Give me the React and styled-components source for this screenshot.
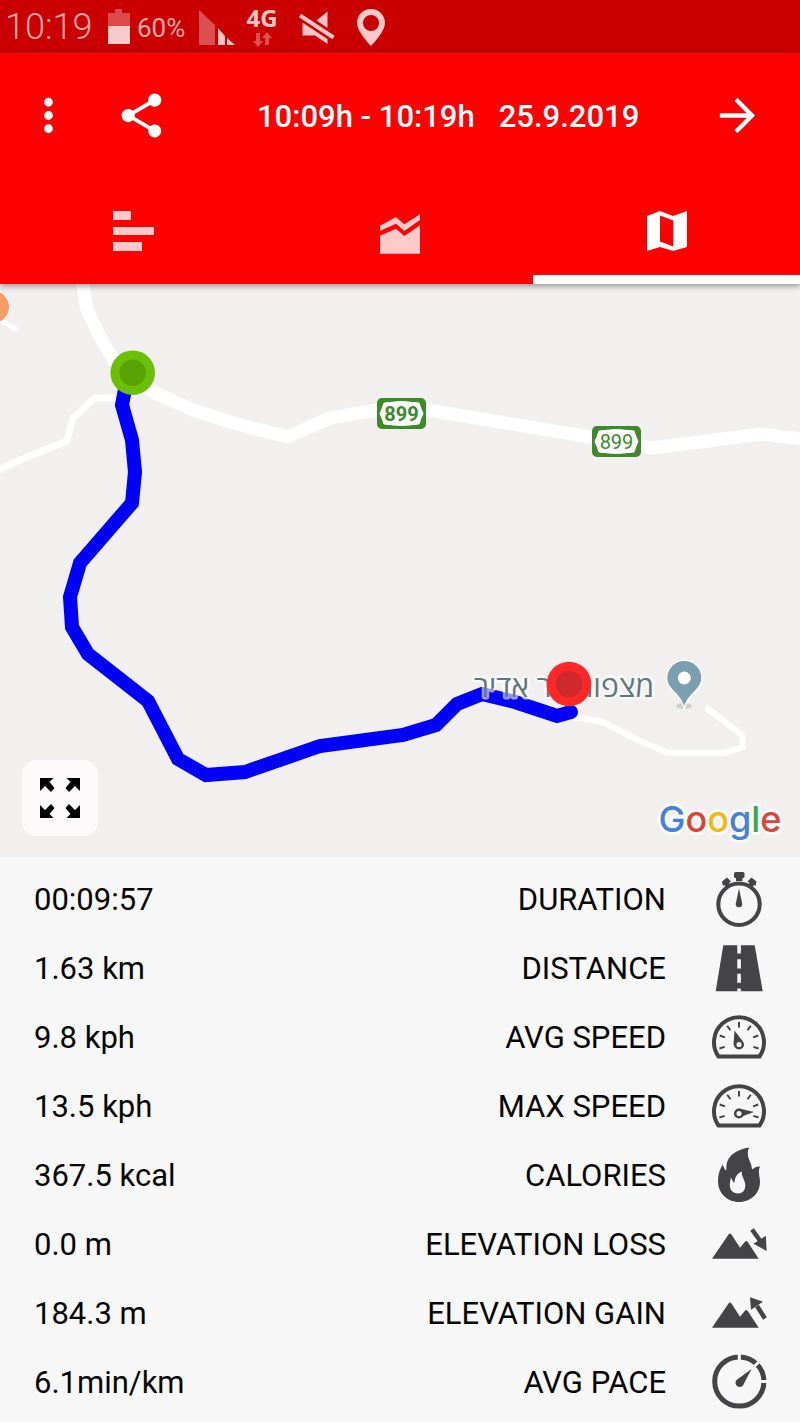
import React from "react";
import styled, { createGlobalStyle } from "styled-components";
import { MdMoreVert, MdShare, MdArrowForward } from "react-icons/md";

const GlobalStyle = createGlobalStyle`
  *, *::before, *::after { box-sizing: border-box; }
  body {
    margin: 0;
    background: #f7f7f7;
    color: #060606;
    font-family: Roboto, "Liberation Sans", sans-serif;
  }
`;

const TRACK = "#0000fa";
const GLYPH = "#444446";

/* ---------- Status bar ---------- */

const StatusBar = styled.div`
  display: flex;
  align-items: center;
  height: 53px;
  padding-left: 5px;
  background: #ca0000;
  color: #f3a9a9;
`;

const Clock = styled.time`
  width: 102px;
  padding-top: 2px;
  font-size: 36px;
  font-weight: 300;
  line-height: 53px;
`;

const BatteryLevel = styled.span`
  width: 62px;
  padding: 4px 0 0 6px;
  font-size: 26px;
  font-weight: 400;
  line-height: 53px;
`;

const StatusIcon = styled.svg`
  display: block;
  flex: none;
  height: 53px;
  width: ${(p) => p.$width}px;
`;

const Network = styled.div`
  display: flex;
  flex-direction: column;
  align-items: center;
  width: 50px;
  font-family: "Open Sans", sans-serif;
  font-size: 24px;
  font-weight: 700;
  line-height: 26px;
  color: #f9c4c4;
`;

function Status() {
  return (
    <StatusBar>
      <Clock>10:19</Clock>
      <StatusIcon $width={24} viewBox="0 0 24 53" aria-hidden="true">
        <path d="M8 9h7v4h8v13H1V13h7z" fill="#db4a4a" />
        <path d="M1 26h22v18H1z" fill="#f8cccc" />
      </StatusIcon>
      <BatteryLevel>60%</BatteryLevel>
      <StatusIcon $width={44} viewBox="0 0 44 53" aria-hidden="true">
        <path d="M6 10l16 15v20H6z" fill="#dd4e4e" />
        <path d="M25 28l7 8v9h-7zM34 38l8 7h-8z" fill="#f8c4c4" />
      </StatusIcon>
      <Network>
        4G
        <svg width="20" height="18" viewBox="0 0 20 18" aria-hidden="true">
          <path d="M4 2h4v8h3l-5 6-5-6h3zM13 14V7h-3l5-6 5 6h-3v7z" fill="#dc5050" />
        </svg>
      </Network>
      <StatusIcon $width={60} viewBox="0 0 60 53" aria-hidden="true">
        <path d="M29.500 20.500l11-9V28zM15.500 22.500v13H28l12.500 8.500v-5z" fill="#f8c4c4" />
        <path d="M13 15.500L46.500 37.500" stroke="#f8c4c4" strokeWidth="4" />
      </StatusIcon>
      <StatusIcon $width={46} viewBox="0 0 46 53" aria-hidden="true">
        <path
          d="M24 9C16 9 10 15 10 23c0 9 14 23 14 23s14-14 14-23C38 15 32 9 24 9zm0 22a8 8 0 1 1 0-16 8 8 0 0 1 0 16z"
          fill="#f9c9c9"
          fillRule="evenodd"
        />
      </StatusIcon>
    </StatusBar>
  );
}

/* ---------- App bar and tabs ---------- */

const Header = styled.header`
  position: relative;
  z-index: 1;
  background: #fe0000;
  color: #fff;
  box-shadow: 0 2px 6px rgba(0, 0, 0, 0.4);
`;

const AppBar = styled.div`
  display: flex;
  align-items: center;
  height: 125px;
  padding: 0 36px 0 22px;
`;

const IconButton = styled.button`
  display: block;
  flex: none;
  width: 53px;
  height: 53px;
  padding: 0;
  border: 0;
  background: none;
  color: inherit;
  cursor: pointer;

  & + & { margin-left: 40px; }
  svg { display: block; width: 100%; height: 100%; }
`;

const Title = styled.h1`
  display: flex;
  flex: 1;
  gap: 24px;
  margin: 0;
  padding: 3px 0 0 89px;
  font-size: 31px;
  font-weight: 500;
  line-height: 40px;
  white-space: nowrap;
`;

const Tabs = styled.div`
  display: grid;
  grid-template-columns: repeat(3, 1fr);
`;

const Tab = styled.button`
  display: flex;
  justify-content: center;
  height: 106px;
  padding: 26px 0 0;
  border: 0;
  border-bottom: 9px solid ${(p) => (p["aria-selected"] ? "#fff" : "transparent")};
  background: none;
  color: ${(p) => (p["aria-selected"] ? "#fff" : "#ffcaca")};
  cursor: pointer;
`;

const TabIcon = styled.svg`
  width: 54px;
  height: 54px;
  fill: currentColor;
`;

const TABS = [
  { name: "Laps", path: "M7 7h18v9H7zM7 23h41v8H7zM7 38h29v9H7z" },
  {
    name: "Charts",
    path: "M7 21.7L23 13l8.3 7.3L47 10.3V16L31.3 27 23 19.7 7 27zM7 31.7l16-7 8.3 7.3L47 21.3v28.4H7z",
  },
  {
    name: "Map",
    path: "M7 12L20 7l13 5 14-5v36l-14 4-13-4-13 4zM20 11.5v26l13.3 5v-26z",
  },
];

/* ---------- Map ---------- */

const MapPanel = styled.section`
  position: relative;
  aspect-ratio: 800 / 573;
  background: #f1f0ee;
`;

const MapDrawing = styled.svg`
  display: block;
  width: 100%;
  height: 100%;
`;

const ShieldText = styled.text`
  font-size: 20px;
  font-weight: ${(p) => (p.$strong ? 700 : 400)};
  text-anchor: middle;
  fill: #3d8a2b;
`;

const PlaceName = styled.text`
  font-family: "Open Sans", "Liberation Sans", sans-serif;
  font-size: 30px;
  fill: #5f7680;
  stroke: rgba(255, 255, 255, 0.6);
  stroke-width: 5px;
  stroke-linejoin: round;
  paint-order: stroke;
  text-anchor: middle;
`;

const MapBrand = styled.text`
  font-family: Inter, Roboto, sans-serif;
  font-size: 36px;
  font-weight: 500;
  stroke: #fafafa;
  stroke-width: 6px;
  stroke-linejoin: round;
  paint-order: stroke;
  text-anchor: middle;
`;

const FullscreenButton = styled.button`
  position: absolute;
  left: 22px;
  bottom: 21px;
  width: 76px;
  height: 76px;
  padding: 0;
  border: 0;
  border-radius: 14px;
  background: #fcfafb;
  cursor: pointer;

  svg { display: block; }
`;

function RoadShield({ x, y, strong }) {
  return (
    <g transform={`translate(${x} ${y})`}>
      <rect width="49" height="31" rx="5" fill="#3d8a2b" />
      <path d="M7 5q17.500-3 35 0 1.500 5 4 10.500-2.500 5.500-4 10.500-17.500 3-35 0Q5.500 21 3 15.500 5.500 10 7 5z" fill="#fff" stroke="#fff" strokeLinejoin="round" />
      <ShieldText x="24.500" y="23" $strong={strong}>899</ShieldText>
    </g>
  );
}

function Marker({ x, y, outer, inner }) {
  return (
    <g>
      <circle cx={x} cy={y} r="22.3" fill={outer} />
      <circle cx={x} cy={y} r="13.3" fill={inner} />
    </g>
  );
}

const BRAND = [
  ["G", "#4381e0"],
  ["o", "#db4437"],
  ["o", "#f0b90f"],
  ["g", "#4381e0"],
  ["l", "#3aa757"],
  ["e", "#db4437"],
];

function RouteMap() {
  return (
    <MapPanel aria-label="Route map">
      <MapDrawing viewBox="0 0 800 573">
        <g fill="none" stroke="#fff" strokeLinejoin="round" strokeLinecap="round">
          <path strokeWidth="13" d="M82-6l5 32 13 27 15 25 18 14 20 16 40 18 37 12 57 15 43-19 47-8 56 1 157 26 62 11 110-14 45 6" />
          <path strokeWidth="7" d="M120 114H95L73 134l-6 23-47 19-24 11" />
          <path strokeWidth="5" d="M0 36l16 9" />
          <path strokeWidth="6" d="M570 433l18 2 17 4 33 17 30 13h57l18-6-1-12-34-26" />
        </g>
        <circle cx="-7" cy="23" r="17" fill="#fff" />
        <circle cx="-7" cy="23" r="16" fill="#fb9c62" />
        <path
          d="M126 100l-4 21 10 35 3 32-3 31-52 60-10 34 2 30 16 27 60 47 30 58 28 16 39-3 75-26 83-11 33-10 21-21 25-10 33 8 42 14 14-4"
          fill="none"
          stroke={TRACK}
          strokeWidth="14"
        />
        <circle cx="571" cy="428" r="7" fill={TRACK} />
        <RoadShield x={377} y={114} strong />
        <RoadShield x={592} y={142} />
        <PlaceName x="564" y="413" direction="rtl">מצפור הר אדיר</PlaceName>
        <ellipse cx="684" cy="422" rx="8" ry="3" fill="#cfcfcf" />
        <path
          d="M684.300 377a17 17 0 0 0-17 17c0 11 13 15 17 28 4-13 17-17 17-28a17 17 0 0 0-17-17z"
          fill="#7aa0b0"
          stroke="#fff"
          strokeWidth="3"
          paintOrder="stroke"
        />
        <circle cx="684.300" cy="394" r="6.500" fill="#fff" />
        <Marker x={132.7} y={88.7} outer="#6cc004" inner="#58a303" />
        <Marker x={569} y={400} outer="#ff2828" inner="#cf2a2b" />
        <MapBrand x="720" y="548">
          {BRAND.map(([letter, color], i) => (
            <tspan key={i} fill={color}>{letter}</tspan>
          ))}
        </MapBrand>
      </MapDrawing>
      <FullscreenButton type="button" aria-label="Full screen">
        <svg width="76" height="76" viewBox="-38 -38 76 76">
          {["1 1", "-1 1", "1 -1", "-1 -1"].map((s) => (
            <path key={s} transform={`scale(${s})`} d="M-20-20h13.500l-4 4 5 6-3.500 4-6-6-5 5z" />
          ))}
        </svg>
      </FullscreenButton>
    </MapPanel>
  );
}

/* ---------- Statistics ---------- */

const StatsTable = styled.table`
  width: 100%;
  margin-top: 8px;
  margin-bottom: 4px;
  border-collapse: collapse;
  font-size: 31px;
  line-height: 40px;
`;

const StatRow = styled.tr`
  height: 69px;
`;

const Value = styled.td`
  padding: 1px 0 0 34px;
`;

const Label = styled.th`
  padding: 1px 0 0;
  font-weight: 400;
  text-align: right;
`;

const IconCell = styled.td`
  width: 134px;
  padding: 0 33px 0 45px;
`;

const Glyph = styled.svg`
  display: block;
  width: 56px;
  height: 56px;
  overflow: visible;
  fill: ${GLYPH};
  stroke: none;
`;

function Gauge({ needle }) {
  return (
    <>
      <path d="M7.500 46.500A25 25 0 1 1 48.500 46.500z" fill="none" stroke={GLYPH} strokeWidth="4" strokeLinejoin="round" />
      {[-107, -70, -35, 0, 35, 70, 107].map((a) => (
        <path key={a} d="M28 12v5.500" stroke={GLYPH} strokeWidth="2" transform={`rotate(${a} 28 32.500)`} />
      ))}
      <path d={needle} />
      <circle cx="28" cy="34.500" r="3.800" fill="#f7f7f7" stroke={GLYPH} strokeWidth="2.500" />
    </>
  );
}

const MOUNTAINS = "M1 41.800L17.500 17.500q1.500-2 3 0L29 30.800l5-6q1.300-1.500 2.600 0l11.100 17z";

const STATS = [
  {
    value: "00:09:57",
    label: "DURATION",
    icon: (
      <>
        <circle cx="28" cy="32.200" r="20.700" fill="none" stroke={GLYPH} strokeWidth="4" />
        <rect x="23" y="0" width="10.500" height="6" rx="1.500" />
        <rect x="25" y="4" width="6.500" height="5" />
        <path d="M11 9.500l5-4 4 4-2 1.500 1 1.500-4 3-1.500-2.500-1.500 1zM45.500 9.500l-5-4-4 4 2 1.500-1 1.500 4 3 1.500-2.500 1.500 1z" />
        <path d="M28 16.500l3.300 15.500a3.300 3.300 0 1 1-6.600 0z" />
      </>
    ),
  },
  {
    value: "1.63 km",
    label: "DISTANCE",
    icon: (
      <>
        <path d="M12.300 4.200h31.400l8 46H4.700z" />
        <path d="M26.300 4h3.600v8.500h-3.600zM26.300 18.200h3.600v9.300h-3.600zM26.300 32.800h3.600v9h-3.600zM26.300 47.500h3.600v3h-3.600z" fill="#f7f7f7" />
      </>
    ),
  },
  { value: "9.8 kph", label: "AVG SPEED", icon: <Gauge needle="M23.500 20.500l-1 14.500h4l5-4z" /> },
  { value: "13.5 kph", label: "MAX SPEED", icon: <Gauge needle="M43 33l-15-3.500v9z" /> },
  {
    value: "367.5 kcal",
    label: "CALORIES",
    icon: (
      <path
        fillRule="evenodd"
        d="M38-.5C27 1 18 7 16 14.500c-.8 3-.5 5-.7 8-1.800-1-2.800-3.500-3.600-6C9 21 7 26 7 33c0 12 9 21 21 21s21-9 21-20c0-6-2.500-10 0-15.500-3-.5-6 1-8 3 0-8-7-12-3-22zM31 23.500c-1.500 4 3.300 8 3.300 14 0 5-3 8-7.500 8-5 0-8-4-8-8.500 0-3 1-4.500.9-7.500 1.500 1.500 1.500 4 3.600 5.500.5-5 2-9.500 7.700-11.500z"
      />
    ),
  },
  {
    value: "0.0 m",
    label: "ELEVATION LOSS",
    icon: (
      <>
        <path d={MOUNTAINS} />
        <path d="M41 12.500l9 12.500" stroke={GLYPH} strokeWidth="4.500" />
        <path d="M55.700 34l-13.200-7.200 12.300-8z" />
      </>
    ),
  },
  {
    value: "184.3 m",
    label: "ELEVATION GAIN",
    icon: (
      <>
        <path d={MOUNTAINS} />
        <path d="M54 32.500L46 20" stroke={GLYPH} strokeWidth="4.500" />
        <path d="M39 11.300l1 12.500 12-8z" />
      </>
    ),
  },
  {
    value: "6.1min/km",
    label: "AVG PACE",
    icon: (
      <>
        <circle cx="28.300" cy="26.500" r="24.600" fill="none" stroke={GLYPH} strokeWidth="5" />
        <path d="M28.300 6v-8M43 11.800l6-6M49 26.500h8" stroke="#f7f7f7" strokeWidth="3" />
        <path d="M40.500 14l-8.500 16.500a4.200 4.200 0 1 1-6.500-5.500z" />
      </>
    ),
  },
];

export default function App() {
  return (
    <>
      <GlobalStyle />
      <Status />
      <Header>
        <AppBar>
          <IconButton type="button" aria-label="More options"><MdMoreVert /></IconButton>
          <IconButton type="button" aria-label="Share"><MdShare /></IconButton>
          <Title>
            <span>10:09h - 10:19h</span>
            <span>25.9.2019</span>
          </Title>
          <IconButton type="button" aria-label="Next activity"><MdArrowForward /></IconButton>
        </AppBar>
        <Tabs role="tablist">
          {TABS.map((tab) => (
            <Tab key={tab.name} type="button" role="tab" aria-label={tab.name} aria-selected={tab.name === "Map"}>
              <TabIcon viewBox="0 0 54 54">
                <path d={tab.path} fillRule="evenodd" />
              </TabIcon>
            </Tab>
          ))}
        </Tabs>
      </Header>
      <main>
        <RouteMap />
        <StatsTable>
          <tbody>
            {STATS.map((stat) => (
              <StatRow key={stat.label}>
                <Value>{stat.value}</Value>
                <Label scope="row">{stat.label}</Label>
                <IconCell>
                  <Glyph viewBox="0 0 56 56" aria-hidden="true">{stat.icon}</Glyph>
                </IconCell>
              </StatRow>
            ))}
          </tbody>
        </StatsTable>
      </main>
    </>
  );
}
